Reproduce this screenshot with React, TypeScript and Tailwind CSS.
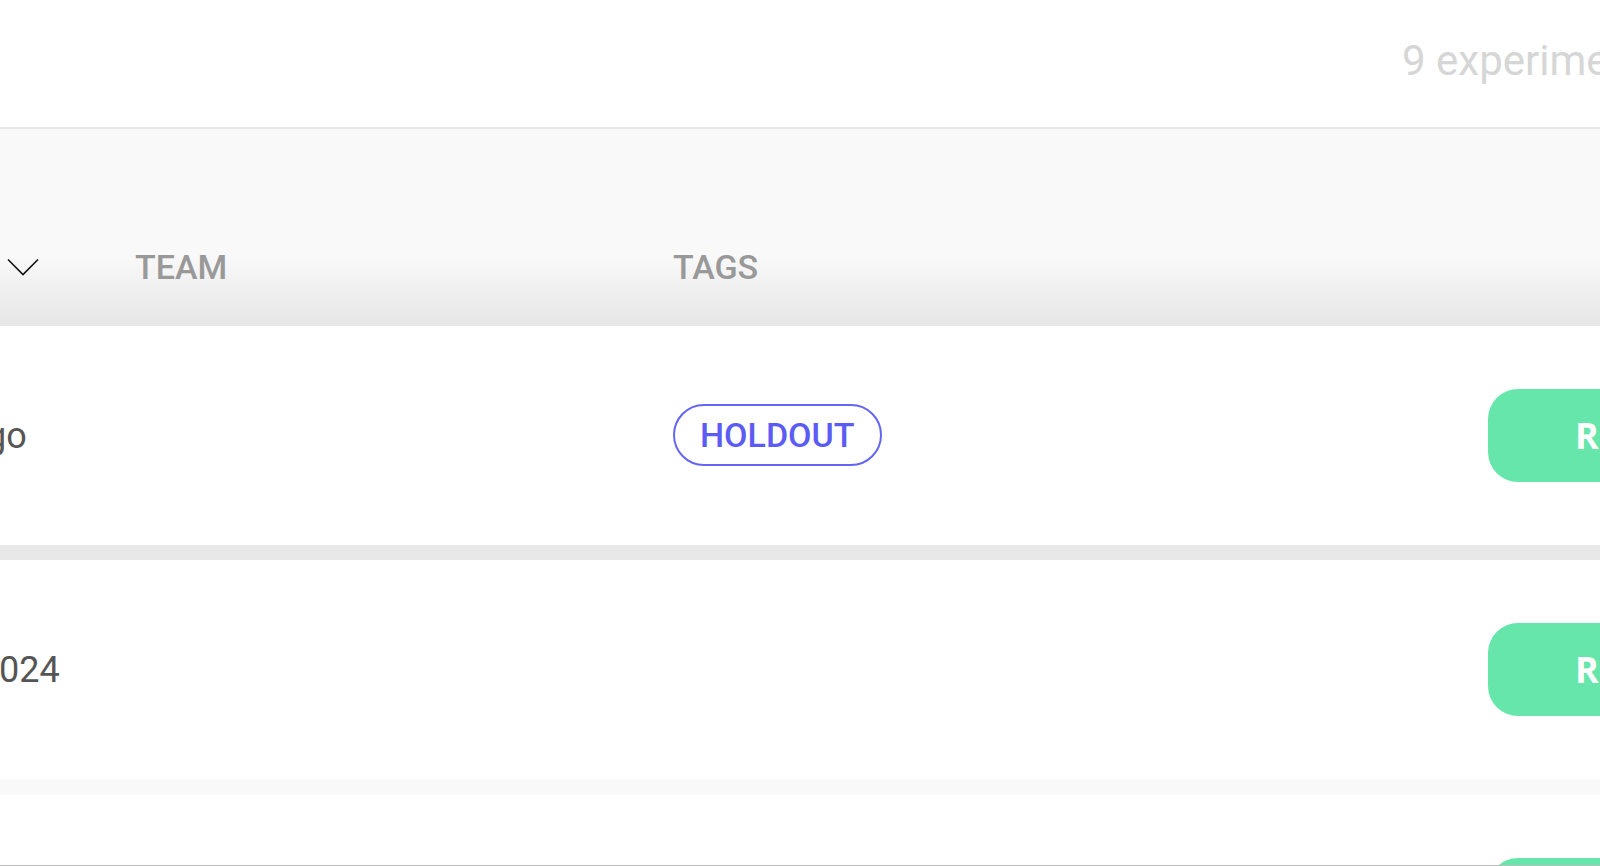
import React from "react";

const rows = [
  { id: 1, name: "go", nameClass: "-ml-[14px]", tags: ["HOLDOUT"], action: "RESULTS" },
  { id: 2, name: "024", nameClass: "-ml-[1px]", tags: [], action: "RESULTS" },
  { id: 3, name: "", nameClass: "", tags: [], action: "RESULTS" },
];

const Chevron = () => (
  <svg width="32" height="18" viewBox="0 0 32 18" fill="none" className="ml-[7px]">
    <path d="M1 1.5 L16 16.5 L31 1.5" stroke="#111" strokeWidth="1.6" />
  </svg>
);

const Row = ({ row }: { row: (typeof rows)[number] }) => (
  <div className="flex h-[219px] shrink-0 items-center bg-white">
    <div className="w-[135px] shrink-0 whitespace-nowrap">
      <span className={`block text-[36px] leading-none text-[#555] ${row.nameClass}`}>{row.name}</span>
    </div>
    <div className="w-[538px] shrink-0" />
    <div className="flex w-[815px] shrink-0 gap-3">
      {row.tags.map((tag) => (
        <span
          key={tag}
          className="-mt-[2px] flex h-[62px] items-center rounded-full border-2 border-[#6464f6] px-[25px] text-[34px] font-medium leading-none text-[#5c5cf4]"
        >
          {tag}
        </span>
      ))}
    </div>
    <button className="flex h-[93px] w-[260px] shrink-0 items-center rounded-[30px] bg-[#67e6ab] pl-[87px] font-['Open_Sans',sans-serif] text-[36px] font-bold leading-none text-white">
      {row.action}
    </button>
  </div>
);

export default function App() {
  return (
    <div className="flex h-[866px] w-[1600px] flex-col overflow-hidden border-b border-[#bdbdbd] bg-white font-['Roboto',sans-serif]">
      {/* Summary bar */}
      <div className="h-[129px] shrink-0 border-b-2 border-[#e8e8e8] pl-[1402px] pt-[40px]">
        <span className="whitespace-nowrap text-[42px] leading-none text-[#d6d6d6]">9 experiments</span>
      </div>

      {/* Table header */}
      <div className="h-[197px] shrink-0 bg-[linear-gradient(to_bottom,#f9f9f9_64%,#e6e6e6)] pt-[121px]">
        <div className="flex h-[34px] items-center text-[34px] font-medium leading-none text-[#999]">
          <div className="w-[135px] shrink-0">
            <Chevron />
          </div>
          <div className="w-[538px] shrink-0">TEAM</div>
          <div>TAGS</div>
        </div>
      </div>

      {/* Rows */}
      <Row row={rows[0]} />
      <div className="h-[15px] shrink-0 bg-[#e8e8e8]" />
      <Row row={rows[1]} />
      <div className="h-[16px] shrink-0 bg-[#f9f9f9]" />
      <Row row={rows[2]} />
    </div>
  );
}
